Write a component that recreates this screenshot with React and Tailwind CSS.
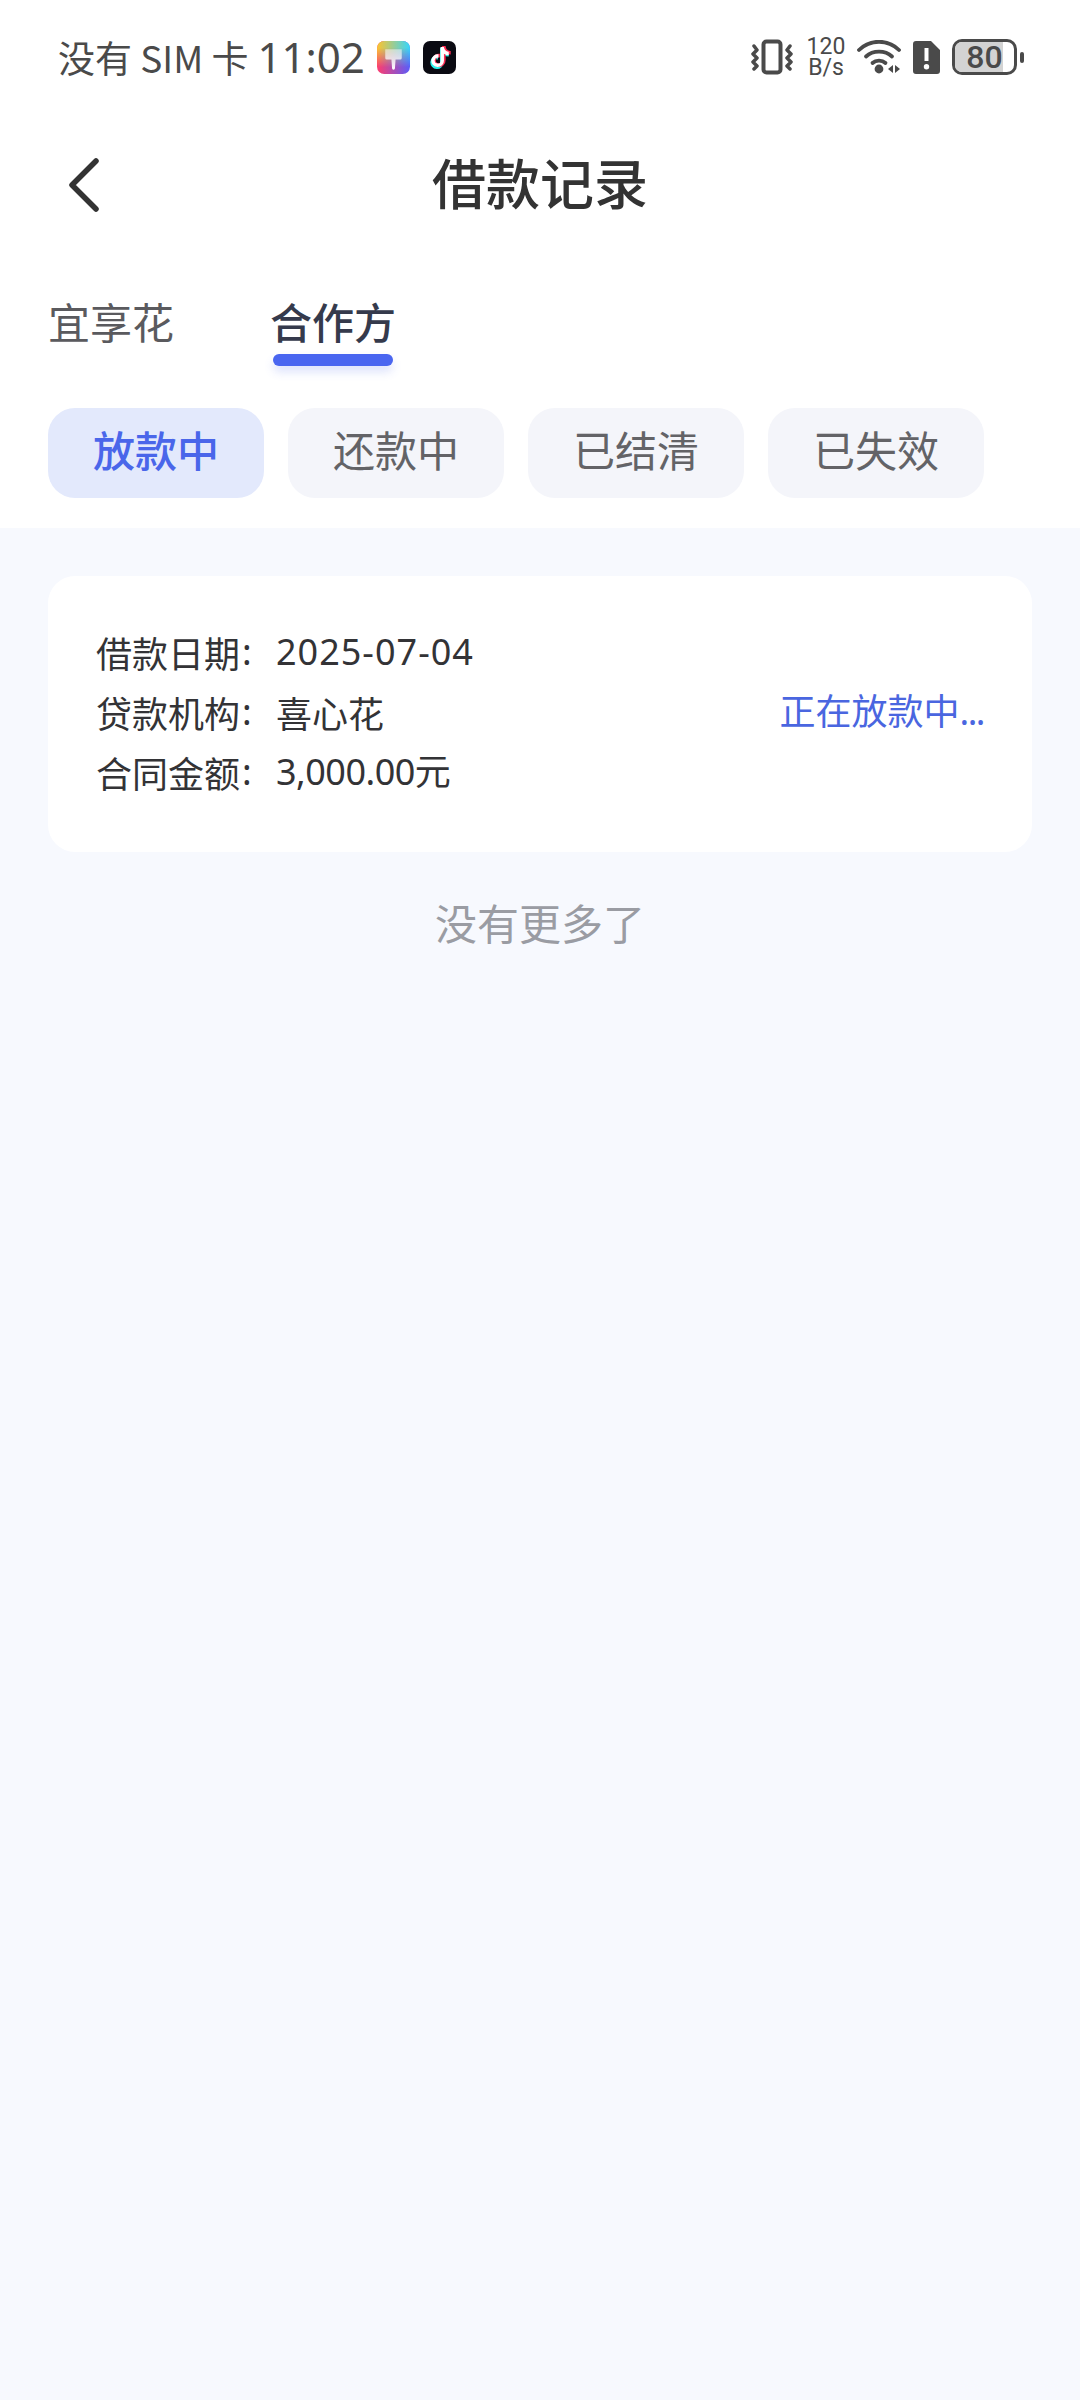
import { FaTiktok } from "react-icons/fa6";

const FONT = "font-['Noto_Sans','Noto_Sans_CJK_SC',sans-serif]";
const CJK = "font-['Noto_Sans_CJK_SC',sans-serif]";

const chips = ["放款中", "还款中", "已结清", "已失效"];

function PaintIcon() {
  return (
    <svg width="33" height="33" viewBox="0 0 32 32" className="shrink-0">
      <defs>
        <linearGradient id="pa" x1="0" y1="0" x2="1" y2="0">
          <stop offset="0" stopColor="#fdc32e" />
          <stop offset="1" stopColor="#35d6fb" />
        </linearGradient>
        <linearGradient id="pb" x1="0" y1="0" x2="1" y2="0">
          <stop offset="0" stopColor="#ff3d6e" />
          <stop offset="1" stopColor="#5a5cfa" />
        </linearGradient>
        <linearGradient id="pfade" x1="0" y1="0" x2="0" y2="1">
          <stop offset="0.2" stopColor="#fff" />
          <stop offset="0.8" stopColor="#000" />
        </linearGradient>
        <mask id="pm">
          <rect width="32" height="32" fill="url(#pfade)" />
        </mask>
        <linearGradient id="pw" x1="0" y1="0" x2="0" y2="1">
          <stop offset="0" stopColor="#fff" stopOpacity="0.5" />
          <stop offset="1" stopColor="#fff" />
        </linearGradient>
      </defs>
      <rect width="32" height="32" rx="7" fill="url(#pb)" />
      <rect width="32" height="32" rx="7" fill="url(#pa)" mask="url(#pm)" />
      <path d="M8 8h16v8.500a1.500 1.500 0 0 1-1.500 1.500H18l-.6 8.500a1.400 1.400 0 0 1-2.800 0L14 18H9.500A1.500 1.500 0 0 1 8 16.500Z" fill="url(#pw)" />
    </svg>
  );
}

function TiktokIcon() {
  return (
    <div className="relative h-[33px] w-[33px] shrink-0 rounded-[7px] bg-[#0a0a12]">
      <FaTiktok className="absolute left-[6px] top-[7px] text-[#25f4ee]" size={21} />
      <FaTiktok className="absolute left-[8px] top-[5px] text-[#fe2c55]" size={21} />
      <FaTiktok className="absolute left-[7px] top-[6px] text-white" size={20} />
    </div>
  );
}

function VibrateIcon() {
  return (
    <svg width="42" height="36" viewBox="0 0 42 36" fill="none" stroke="#4a4a4a" strokeLinecap="round" strokeLinejoin="round">
      <rect x="12.500" y="2.500" width="17" height="31" rx="3" strokeWidth="4" />
      <path d="M3 7 6 11 2 15 6 19 2 23 6 27 3 30" strokeWidth="3.500" />
      <path d="M39 7 36 11 40 15 36 19 40 23 36 27 39 30" strokeWidth="3.500" />
    </svg>
  );
}

function WifiIcon() {
  return (
    <svg width="44" height="34" viewBox="0 0 44 34" fill="none" stroke="#4a4a4a" strokeLinecap="round">
      <path d="M2 10C13-1 31-1 42 10" strokeWidth="3.800" />
      <path d="M9 16.500C16 10 28 10 35 16.500" strokeWidth="3.800" />
      <path d="M15.500 23C19 19.800 25 19.800 28.500 23" strokeWidth="3.800" />
      <circle cx="22" cy="29" r="4.400" fill="#4a4a4a" stroke="none" />
      <path d="M36 25v8l-5-4Z M38 25v8l5-4Z" fill="#4a4a4a" stroke="none" />
    </svg>
  );
}

function SimIcon() {
  return (
    <svg width="27" height="33" viewBox="0 0 27 33">
      <path
        fillRule="evenodd"
        fill="#4a4a4a"
        d="M3 0H18L27 9V30a3 3 0 0 1-3 3H3a3 3 0 0 1-3-3V3a3 3 0 0 1 3-3ZM11.500 7V20H15.500V7ZM13.500 23a2.700 2.700 0 1 0 0 5.400 2.700 2.700 0 0 0 0-5.400Z"
      />
    </svg>
  );
}

function Battery() {
  return (
    <div className="flex items-center">
      <div className="relative flex h-[36px] w-[65px] items-center justify-center overflow-hidden rounded-[10px] border-[3px] border-[#4a4a4a]">
        <div className="absolute bottom-0 left-0 top-0 w-[48px] bg-[#d3d3d3]" />
        <span className="relative font-['Roboto',sans-serif] text-[32px] font-medium leading-none text-[#4a4a4a]">80</span>
      </div>
      <div className="ml-[3px] h-[11px] w-[4px] rounded-[2px] bg-[#4a4a4a]" />
    </div>
  );
}

function Row({ label, children }) {
  return (
    <div className="flex h-[60px] items-center">
      <span className="flex w-[180px] shrink-0 items-center whitespace-nowrap">
        <span className={CJK}>{label}</span>
        <span className="ml-[2px]">:</span>
      </span>
      {children}
    </div>
  );
}

export default function App() {
  return (
    <div className={`flex min-h-[2400px] flex-col bg-[#f7f9fe] ${FONT}`}>
      <div className="h-[528px] bg-white">
        {/* status bar */}
        <div className="flex h-[114px] items-center justify-between pl-[58px] pr-[56px] text-[#4a4a4a]">
          <div className="flex items-center">
            <span className={`text-[37px] leading-none ${CJK}`}>没有 SIM 卡</span>
            <span className="ml-[9px] text-[42px] leading-none">11:02</span>
            <div className="ml-[12px] flex gap-[13px]">
              <PaintIcon />
              <TiktokIcon />
            </div>
          </div>
          <div className="flex items-center">
            <VibrateIcon />
            <div className="ml-[15px] flex w-[36px] flex-col items-center font-['Roboto',sans-serif] text-[23px] leading-[21px]">
              <span>120</span>
              <span>B/s</span>
            </div>
            <div className="ml-[13px]"><WifiIcon /></div>
            <div className="ml-[12px]"><SimIcon /></div>
            <div className="ml-[12px]"><Battery /></div>
          </div>
        </div>

        {/* header */}
        <div className="relative flex h-[138px] items-center justify-center pb-[2px]">
          <svg width="36" height="60" viewBox="0 0 36 60" fill="none" className="absolute left-[65px] top-[41px]">
            <path d="M31 6 7 30 31 54" stroke="#333" strokeWidth="5.500" strokeLinecap="round" strokeLinejoin="round" />
          </svg>
          <h1 className={`text-[54px] font-medium leading-none text-[#333333] ${CJK}`}>借款记录</h1>
        </div>

        {/* tabs */}
        <div className="mt-[46px] flex pl-[48px]">
          <span className={`text-[42px] leading-[46px] text-[#5a5a5e] ${CJK}`}>宜享花</span>
          <div className="ml-[96px] flex w-[126px] flex-col items-center">
            <span className={`text-[42px] font-medium leading-[46px] text-[#353a4c] ${CJK}`}>合作方</span>
            <div className="mt-[10px] h-[12px] w-[120px] rounded-full bg-[#4a66f0] shadow-[0_6px_10px_rgba(74,102,240,0.18)]" />
          </div>
        </div>

        {/* status chips */}
        <div className="mt-[42px] flex gap-[24px] pl-[48px]">
          {chips.map((chip, i) => (
            <div
              key={chip}
              className={`flex h-[90px] w-[216px] items-center justify-center rounded-[27px] pb-[10px] text-[42px] ${CJK} ${
                i === 0 ? "bg-[#e3e9fc] font-medium text-[#4a66ea]" : "bg-[#f4f5fa] text-[#636367]"
              }`}
            >
              {chip}
            </div>
          ))}
        </div>
      </div>

      {/* list */}
      <div className="px-[48px] pt-[48px]">
        <div className="flex h-[276px] items-center justify-between rounded-[27px] bg-white pb-[4px] pl-[48px] pr-[48px] text-[36px] text-[#333336]">
          <div className="flex flex-col leading-none">
            <Row label="借款日期">
              <span className="tracking-[1px]">2025-07-04</span>
            </Row>
            <Row label="贷款机构">
              <span className={CJK}>喜心花</span>
            </Row>
            <Row label="合同金额">
              <span className="tracking-[-0.5px]">3,000.00元</span>
            </Row>
          </div>
          <span className="text-[#4a66e0]">
            正在放款中<span className="tracking-[-1.500px]">...</span>
          </span>
        </div>
        <p className={`mt-[42px] text-center text-[42px] leading-[56px] text-[#9a9ca3] ${CJK}`}>没有更多了</p>
      </div>
    </div>
  );
}
